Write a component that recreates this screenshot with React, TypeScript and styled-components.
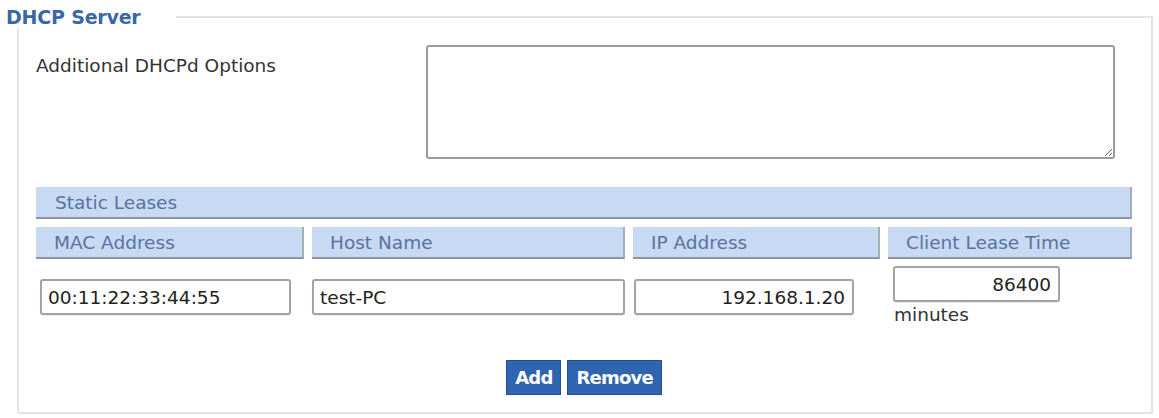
import styled, { createGlobalStyle } from "styled-components";

const GlobalStyle = createGlobalStyle`
  html, body {
    margin: 0;
    padding: 0;
    background: #ffffff;
  }
  body {
    font-family: "DejaVu Sans", Verdana, sans-serif;
    color: #333333;
  }
`;

const Page = styled.div`
  width: 1159px;
  height: 418px;
  padding-top: 6px;
  box-sizing: border-box;
  overflow: hidden;
`;

const Frame = styled.fieldset`
  margin: 0 0 0 17px;
  width: 1136px;
  box-sizing: border-box;
  border: 2px solid #e4e4e4;
  padding: 0 19px 17px 17px;
`;

const Legend = styled.legend`
  margin-left: -30px;
  padding: 0 35px 0 0;
  font-size: 19px;
  line-height: 22px;
  font-weight: bold;
  color: #3a67a6;
  letter-spacing: -0.2px;
`;

const OptionRow = styled.div`
  display: flex;
  align-items: flex-start;
  margin-top: 17px;
`;

const OptionLabel = styled.label`
  width: 390px;
  margin-top: 10px;
  font-size: 18.5px;
  line-height: 22px;
  color: #333333;
`;

const OptionText = styled.textarea`
  width: 689px;
  height: 114px;
  box-sizing: border-box;
  border: 2px solid #9a9a9a;
  border-radius: 3px;
  background: #ffffff;
  font: inherit;
`;

const Leases = styled.div`
  display: grid;
  grid-template-columns: 268px 313px 247px 244px;
  column-gap: 8px;
  row-gap: 8px;
  margin-top: 28px;
  width: 1096px;
`;

const HeadCell = styled.div<{ $span?: boolean }>`
  grid-column: ${({ $span }) => ($span ? "1 / -1" : "auto")};
  height: 32px;
  box-sizing: border-box;
  background: #c7d9f3;
  border-right: 2px solid #a4adba;
  border-bottom: 2px solid #8e949c;
  padding-left: ${({ $span }) => ($span ? "19px" : "18px")};
  font-size: 18.5px;
  line-height: 31px;
  color: #58739e;
  white-space: nowrap;
  overflow: hidden;
`;

const DataCell = styled.div<{ $indent: number }>`
  display: flex;
  flex-direction: column;
  justify-content: center;
  padding-left: ${({ $indent }) => $indent}px;
  margin-top: -1px;
`;

const Field = styled.input<{ $width: number; $right?: boolean }>`
  width: ${({ $width }) => $width}px;
  height: 36px;
  box-sizing: border-box;
  border: 2px solid #a3a3a3;
  border-radius: 3px;
  padding: 0 7px 0 6px;
  font-family: "DejaVu Sans", Verdana, sans-serif;
  font-size: 18.5px;
  color: #222222;
  background: #ffffff;
  text-align: ${({ $right }) => ($right ? "right" : "left")};
  box-shadow: 0 1px 1px rgba(0, 0, 0, 0.08);
  outline: none;
`;

const Unit = styled.span`
  font-size: 18.5px;
  line-height: 26px;
  color: #333333;
  padding-left: 1px;
`;

const Actions = styled.div`
  display: flex;
  justify-content: center;
  gap: 6px;
  width: 1096px;
  margin-top: 32px;
`;

const Button = styled.button`
  height: 35px;
  padding: 0 8px;
  border: 1px solid #254f8c;
  background: #2f65b0;
  color: #ffffff;
  font-family: "DejaVu Sans", Verdana, sans-serif;
  font-size: 18px;
  font-weight: bold;
  letter-spacing: -0.8px;
  cursor: pointer;
`;

const columns = ["MAC Address", "Host Name", "IP Address", "Client Lease Time"];

export default function App() {
  return (
    <>
      <GlobalStyle />
      <Page>
        <Frame>
          <Legend>DHCP Server</Legend>
          <OptionRow>
            <OptionLabel>Additional DHCPd Options</OptionLabel>
            <OptionText />
          </OptionRow>

          <Leases>
            <HeadCell $span>Static Leases</HeadCell>
            {columns.map((c) => (
              <HeadCell key={c}>{c}</HeadCell>
            ))}
            <DataCell $indent={4}>
              <Field $width={251} defaultValue="00:11:22:33:44:55" />
            </DataCell>
            <DataCell $indent={0}>
              <Field $width={313} defaultValue="test-PC" />
            </DataCell>
            <DataCell $indent={1}>
              <Field $width={220} $right defaultValue="192.168.1.20" />
            </DataCell>
            <DataCell $indent={5}>
              <Field $width={167} $right defaultValue="86400" />
              <Unit>minutes</Unit>
            </DataCell>
          </Leases>

          <Actions>
            <Button>Add</Button>
            <Button>Remove</Button>
          </Actions>
        </Frame>
      </Page>
    </>
  );
}
